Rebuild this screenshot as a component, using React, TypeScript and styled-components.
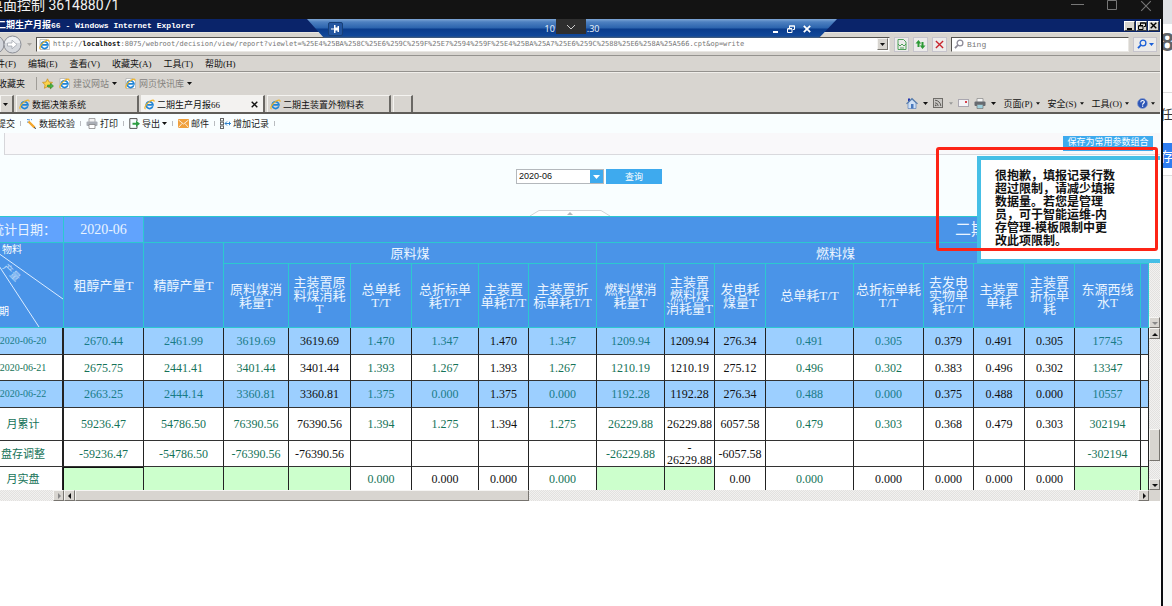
import React from "react";
import styled, { createGlobalStyle, css } from "styled-components";

const Global = createGlobalStyle`
  * { box-sizing: border-box; }
  body {
    margin: 0;
    background: #fff;
    font-family: "Liberation Serif", "Noto Sans CJK SC", serif;
    font-size: 9px;
    color: #111;
  }
  button, input, select { font: inherit; color: inherit; margin: 0; padding: 0; border: 0; background: none; }
  a { color: inherit; text-decoration: none; }
  svg { display: block; flex: none; }
`;

/* ---------- shell ---------- */

const Page = styled.div`
  display: grid;
  grid-template-columns: minmax(0, 1fr) 9px;
  min-height: 100vh;
  overflow: hidden;
`;

const Session = styled.div`
  position: relative;
  display: flex;
  flex-direction: column;
  margin-left: -16px;
  border-right: 2px solid #0b0d10;
`;

const SessionBar = styled.header`
  display: flex;
  justify-content: space-between;
  height: 19px;
  margin-right: -2px;
  padding: 0 11px 0 5px;
  background: #131313;
  color: #f0f0f0;
  font: 14px/11px Roboto, "Noto Sans CJK SC", sans-serif;
  white-space: nowrap;
`;

const SessionButtons = styled.div`
  display: flex;
  align-items: flex-start;
  gap: 22px;
`;

const BareButton = styled.button`
  display: flex;
  align-items: center;
  justify-content: center;
  gap: 2px;
  cursor: pointer;
`;

const Desktop = styled.div`
  position: relative;
  flex: 1;
  margin-right: 1px;
`;

const ConnectionBar = styled.div`
  position: absolute;
  z-index: 3;
  top: 0;
  left: 323px;
  width: 530px;
  height: 19px;
  display: flex;
  align-items: center;
  justify-content: space-between;
  padding: 0 26px 0 21px;
  background: linear-gradient(#7ea6d6 0, #4d80c0 3px, #2b63ad 9px, #0a3c8c 10px, #11489a 17px, #4a6078 19px);
  clip-path: polygon(0 0, 100% 0, 512px 100%, 17px 100%);
  color: #e6eef8;
  font: 9px/19px "Noto Sans", sans-serif;
`;

const ConnectionHost = styled.div`
  display: flex;
  align-self: flex-start;
  gap: 1px;
  margin-left: 28px;
`;

const ConnectionToggle = styled(BareButton)`
  width: 30px;
  height: 15px;
  background: #2f2f2f;
`;

const PinButton = styled(BareButton)`
  width: 15px;
  height: 14px;
  border: 1px solid #174078;
  border-radius: 2px;
  background: #2456a0;
`;

const ConnectionButtons = styled.div`
  display: flex;
  gap: 8px;
`;

/* ---------- browser ---------- */

const TitleBar = styled.div`
  display: flex;
  align-items: center;
  justify-content: space-between;
  height: 14px;
  padding: 0 1px 0 13px;
  background: #0a246a;
  border-bottom: 1px solid #e7e5e0;
  color: #fff;
  font: bold 8px/13px "Liberation Mono", "Noto Sans CJK SC", monospace;
`;

const TitleCjk = styled.span`
  font-size: 9px;
`;

const WindowButtons = styled.div`
  display: flex;
  gap: 1px;
`;

const WindowButton = styled(BareButton)`
  width: 11px;
  height: 10px;
  background: #d8d5d0;
  border: 1px solid;
  border-color: #fff #404040 #404040 #fff;
  color: #000;
`;

const AddressRow = styled.div`
  display: flex;
  align-items: center;
  gap: 4px;
  height: 23px;
  padding: 0 3px 0 14px;
  background: #d8d5d0;
  border-bottom: 1px solid #94928e;
`;

const NavGroup = styled.div`
  display: flex;
  align-items: center;
  gap: 5px;
  width: 34px;
`;

const Field = styled.label<{ $w?: number }>`
  display: flex;
  align-items: center;
  gap: 3px;
  height: 15px;
  ${(p) => (p.$w ? `width: ${p.$w}px;` : "flex: 1; min-width: 0;")}
  padding: 0 1px 0 2px;
  background: #fff;
  border: 1px solid;
  border-color: #55534f #e9e7e3 #e9e7e3 #55534f;
  color: #777;
`;

const Url = styled.div`
  flex: 1;
  min-width: 0;
  overflow: hidden;
  white-space: nowrap;
  font: 7px/13px "DejaVu Sans Mono", monospace;
`;

const UrlHost = styled.b`
  color: #111;
`;

const SearchInput = styled.input`
  flex: 1;
  min-width: 0;
  outline: 0;
  font: 8px/13px "Liberation Mono", monospace;
  &::placeholder { color: #777; opacity: 1; }
`;

const SquareButton = styled(BareButton)<{ $w?: number }>`
  width: ${(p) => p.$w ?? 15}px;
  height: 15px;
  background: #ecebea;
  border: 1px solid #c6c4cc;
`;

const ClassicButton = styled(BareButton)<{ $w?: number; $h?: number }>`
  flex: none;
  width: ${(p) => p.$w ?? 11}px;
  height: ${(p) => p.$h ?? 11}px;
  background: #d8d5d0;
  border: 1px solid;
  border-color: #f6f5f3 #77746f #77746f #f6f5f3;
`;

const MenuRow = styled.nav`
  display: flex;
  align-items: center;
  gap: 12px;
  height: 16px;
  padding-left: 3px;
  background: #d8d5d0;
  border-bottom: 1px solid #94928e;
  line-height: 12px;
`;

const FavoritesRow = styled.div`
  display: flex;
  align-items: center;
  gap: 5px;
  height: 22px;
  padding-left: 14px;
  background: #d8d5d0;
  border-top: 1px solid #f0eeea;
`;

const Favorite = styled.a`
  display: flex;
  align-items: center;
  gap: 3px;
  margin-right: 3px;
  color: #85837f;
`;

const Divider = styled.span`
  width: 1px;
  height: 13px;
  margin: 0 0 0 6px;
  background: #a09d98;
`;

const TabRow = styled.div`
  display: flex;
  align-items: flex-end;
  height: 20px;
  padding: 0 5px 0 16px;
  background: #d8d5d0;
  border-bottom: 2px solid #5f5d59;
`;

const Tab = styled.button<{ $active?: boolean; $w: number }>`
  display: flex;
  align-items: center;
  gap: 2px;
  width: ${(p) => p.$w}px;
  height: 17px;
  margin-right: 2px;
  padding: 0 5px 0 2px;
  white-space: nowrap;
  background: ${(p) => (p.$active ? "#f3f2f0" : "#d8d5d0")};
  border: solid;
  border-width: 1px 2px 0 1px;
  border-color: #f4f3f0 #6a6864 #fff #f4f3f0;
`;

const TabLabel = styled.span`
  flex: 1;
  text-align: left;
`;

const CommandBar = styled.div`
  display: flex;
  align-items: center;
  align-self: center;
  gap: 8px;
  margin-left: auto;
`;

const CommandIcons = styled.div`
  display: flex;
  align-items: center;
  gap: 5px;
`;

const Command = styled(BareButton)<{ $gap?: number }>`
  gap: ${(p) => p.$gap ?? 3}px;
  white-space: nowrap;
`;

/* ---------- report ---------- */

const Report = styled.main`
  position: relative;
  background: #f9feff;
`;

const Toolbar = styled.div`
  display: flex;
  align-items: center;
  height: 19px;
  padding-left: 8px;
  background: #f9feff;
  color: #222;
`;

const ToolButton = styled(BareButton)`
  position: relative;
  height: 13px;
  padding: 0 6px 0 5px;
  &::after {
    content: "";
    position: absolute;
    right: 0;
    top: 4px;
    width: 1px;
    height: 5px;
    background: #b9bcc0;
  }
`;

const Strip = styled.div`
  display: flex;
  justify-content: flex-end;
  height: 22px;
  margin-left: 20px;
  padding: 3px 7px 0 0;
  background: #f9f8fa;
  border-left: 1px solid #d6d6da;
  border-bottom: 1px solid #d9d9dd;
`;

const BlueButton = styled.button<{ $w: number }>`
  width: ${(p) => p.$w}px;
  height: 15px;
  background: #3eaaee;
  color: #fff;
  line-height: 12px;
  white-space: nowrap;
  cursor: pointer;
`;

const SaveButton = styled(BlueButton)`
  padding-bottom: 3px;
`;

const Params = styled.form`
  position: relative;
  display: flex;
  justify-content: center;
  gap: 2px;
  height: 61px;
  padding: 14px 0 0 34px;
`;

const SelectBox = styled.div`
  position: relative;
  width: 88px;
  height: 15px;
  border: 1px solid #b4b8bc;
  background: linear-gradient(90deg, #fff calc(100% - 13px), #3eaaee calc(100% - 13px));
`;

const MonthSelect = styled.select`
  width: 100%;
  height: 13px;
  padding-left: 2px;
  appearance: none;
  outline: 0;
  font: 9px/13px "Liberation Sans", sans-serif;
`;

const SelectArrow = styled.svg`
  position: absolute;
  right: 3px;
  top: 5px;
  pointer-events: none;
`;

const Handle = styled.button`
  position: absolute;
  left: calc(50% - 42px);
  bottom: 0;
`;

const SheetGrid = styled.div`
  display: grid;
  grid-template-columns: minmax(0, 1fr) 11px;
  background: #fff;
`;

const Sheet = styled.table`
  width: 100%;
  table-layout: fixed;
  border-collapse: separate;
  border-spacing: 0;
  border-top: 1px solid #2cc8cf;
  line-height: 12px;
  font-size: 12px;
  text-align: center;
`;

const Row = styled.tr<{ $h: number; $alt?: boolean }>`
  height: ${(p) => p.$h}px;
  background: ${(p) => (p.$alt ? "#9ccfff" : "#fff")};
`;

const Head = styled.th<{ $date?: boolean; $title?: boolean }>`
  padding: 0;
  overflow: hidden;
  white-space: nowrap;
  font-weight: 400;
  font-size: 13px;
  line-height: 13px;
  color: #eaf4ff;
  background: ${(p) => (p.$date ? "#61a3fd" : "#4a94e8")};
  border-right: 1px solid #2cc8cf;
  border-bottom: 1px solid #2cc8cf;
  ${(p) => p.$title && css`
    padding-right: 161px;
    text-align: right;
    font-size: 16px;
    line-height: 18px;
  `}
`;

const MonthText = styled.span`
  font-size: 14px;
`;

const Corner = styled(Head)`
  vertical-align: top;
`;

type Tone = "green" | "black";

const Cell = styled.td<{ $tone: Tone; $alt?: boolean; $edit?: boolean; $active?: boolean }>`
  padding: 0;
  overflow-wrap: anywhere;
  color: ${(p) => (p.$tone === "black" ? "#111" : p.$alt ? "#197c88" : "#157358")};
  background: ${(p) => (p.$edit ? "#ccffcc" : "transparent")};
  border-right: 1px solid #222;
  border-bottom: 1px solid #333;
  tr:last-child > & { border-bottom: 0; }
  ${(p) => p.$active && css`box-shadow: inset 0 1px #111, -1px 0 #111;`}
`;

const RowHead = styled.th<{ $small?: boolean; $alt?: boolean }>`
  padding: 0;
  font-weight: normal;
  font-size: ${(p) => (p.$small ? 10 : 11)}px;
  color: ${(p) => (p.$alt ? "#197c88" : "#157358")};
  border-right: 2px solid #222;
  border-bottom: 1px solid #333;
  tr:last-child > & { border-bottom: 0; }
`;

const trackFill = css`
  background: repeating-conic-gradient(#e2e1df 0 25%, #f2f1f0 0 50%) 0 0 / 2px 2px;
`;

const VTrack = styled.div<{ $h?: number }>`
  ${trackFill}
  display: flex;
  flex-direction: column;
  justify-content: flex-end;
  ${(p) => (p.$h ? `height: ${p.$h}px;` : "flex: 1;")}
`;

const VColumn = styled.div`
  display: flex;
  flex-direction: column;
`;

const Grow = styled.span`
  flex: 1;
`;

const VThumb = styled(ClassicButton)`
  margin-bottom: 18px;
`;

const HBar = styled.div`
  ${trackFill}
  display: flex;
  height: 11px;
`;

const HLeft = styled.div`
  display: flex;
  justify-content: flex-end;
  width: 80px;
`;

const HThumb = styled(ClassicButton)`
  width: 39%;
`;

const ScrollCorner = styled.span`
  background: #d8d5d0;
`;

const Notice = styled.div`
  position: absolute;
  z-index: 2;
  top: 42px;
  right: 0;
  width: 183px;
  height: 107px;
  padding: 10px 0 0 14px;
  background: #fff;
  border: solid #46bfe6;
  border-width: 4px 0 4px 4px;
  color: #111;
  font: bold 12px/13px "Liberation Sans", "Noto Sans CJK SC", sans-serif;
`;

const Highlight = styled.div`
  position: absolute;
  z-index: 4;
  top: 33px;
  right: 2px;
  width: 222px;
  height: 104px;
  border: 3px solid #fd2416;
  border-radius: 3px;
  pointer-events: none;
`;

/* ---------- page behind the session window ---------- */

const Behind = styled.aside`
  overflow: hidden;
  background: #f9f9f9;
  font: 13px/25px "Noto Sans CJK SC", sans-serif;
  text-indent: -3px;
`;

const BehindTop = styled.div`
  height: 24px;
  background: #e0e2e6;
`;

const BehindLogo = styled.div`
  height: 69px;
  border-bottom: 1px solid #dcdcdc;
  background: #fff;
  color: #5f6368;
  font: bold 26px/36px "Liberation Sans", sans-serif;
`;

const BehindLink = styled.div`
  height: 50px;
  padding-top: 8px;
  background: #fff;
  color: #333;
`;

const BehindButton = styled.div`
  height: 25px;
  background: #2f7df0;
  color: #fff;
`;

const BehindGap = styled.div`
  height: 8px;
  background: #fff;
  border-bottom: 1px solid #ddd;
`;

/* ---------- icons ---------- */

const Caret = ({ color = "#111", w = 5 }: { color?: string; w?: number }) => (
  <svg width={w} height="3" viewBox="0 0 5 3"><path d="M0 0h5L2.500 3z" fill={color} /></svg>
);

const Arrow = ({ dir, color = "#111" }: { dir: "up" | "down" | "left" | "right"; color?: string }) => {
  const d = {
    up: "M1 6h6L4 3z", down: "M1 3h6L4 6z", left: "M5 1v6L2 4z", right: "M3 1v6l3-3z",
  }[dir];
  return <svg width="8" height="8" viewBox="0 0 8 8"><path d={d} fill={color} /></svg>;
};

const IeIcon = ({ page }: { page?: boolean }) => (
  <svg width="11" height="11" viewBox="0 0 11 11" fill="none">
    {page && <path d="M1 .5h7l2.500 2.500v7.500H1z" fill="#fff" stroke="#aaa" strokeWidth=".7" />}
    <path d="M8.800 7.300A3.400 3.400 0 1 1 9 5.800H3.200" stroke="#1f84d6" strokeWidth="1.700" />
    <path d="M1.600 10C-.5 9.500 2 5.200 5 2.900 8 .7 10.800.4 9.900 2.800" stroke="#f0b428" strokeWidth="1.100" />
  </svg>
);

const NavIcon = () => (
  <svg width="24" height="19" viewBox="0 0 24 19">
    <circle cx="-3" cy="9.500" r="9" fill="#d3d6dc" stroke="#8b8e96" />
    <circle cx="14.500" cy="9.500" r="8.500" fill="#d5d8dd" stroke="#8b8e96" />
    <path d="M7 8a7.600 7.600 0 0 1 15 0z" fill="#eef0f3" />
    <path d="M9.500 8h4.500V5.200l5 4.300-5 4.300V11H9.500z" fill="#fff" stroke="#9a9da6" strokeWidth=".7" />
  </svg>
);

const Lens = ({ color }: { color: string }) => (
  <svg width="10" height="10" viewBox="0 0 10 10" fill="none" stroke={color}>
    <circle cx="6" cy="4" r="2.900" strokeWidth="1.300" /><path d="M4 6L1 9.200" strokeWidth="1.800" />
  </svg>
);

const CompatIcon = () => (
  <svg width="10" height="11" viewBox="0 0 10 11" fill="none" stroke="#3f9a4b" strokeWidth=".9">
    <path d="M1 .5h5.500L9 3v7.500H1zM1 5l2 2 2-2 2 2 2-2" /><path d="M3 9h4" />
  </svg>
);

const RefreshIcon = () => (
  <svg width="11" height="11" viewBox="0 0 11 11" fill="#2c9a35">
    <path d="M3.500 1L.5 4.500h2V8h2V4.500h1.700z" /><path d="M7.500 10l3-3.500h-2V3h-2v3.500H4.800z" />
  </svg>
);

const Cross = ({ color, size, stroke }: { color: string; size: number; stroke: number }) => (
  <svg width={size} height={size} viewBox="0 0 10 10" stroke={color} strokeWidth={stroke}><path d="M1 1l8 8M9 1L1 9" /></svg>
);

const RestoreIcon = ({ color }: { color: string }) => (
  <svg width="8" height="8" viewBox="0 0 8 8" fill="none" stroke={color}>
    <path d="M2.500 3V1h5v3.500H6M2 1h6" /><path d="M.5 4h4.500v3.500H.5zM.5 3.500H5" />
  </svg>
);

const MinIcon = ({ color }: { color: string }) => (
  <svg width="6" height="8" viewBox="0 0 6 8"><path d="M0 6h5v2H0z" fill={color} /></svg>
);

const StarIcon = () => (
  <svg width="12" height="12" viewBox="0 0 12 12">
    <path d="M5.500.8l1.500 3.200 3.500.4-2.600 2.400.7 3.500-3.100-1.700-3.100 1.700.7-3.500L.5 4.400 4 4z" fill="#fbd34b" stroke="#c98a12" strokeWidth=".7" />
    <path d="M5.500 7h3V5.200l3 2.800-3 2.800V9h-3z" fill="#49b544" stroke="#257a25" strokeWidth=".5" />
  </svg>
);

const HomeIcon = () => (
  <svg width="12" height="12" viewBox="0 0 12 12">
    <path d="M2 1.500h2v3H2z" fill="#2335b0" /><path d="M2 6l4-4 4 4v5.500H2z" fill="#cfe0f5" stroke="#4c75b5" strokeWidth=".6" />
    <path d="M0 6.500L6 .8l6 5.700-1 .8L6 2.700 1 7.300z" fill="#5a7fae" /><path d="M5 7h2.500v4.500H5z" fill="#4979bd" />
  </svg>
);

const RssIcon = () => (
  <svg width="10" height="10" viewBox="0 0 10 10" fill="none">
    <rect x=".5" y=".5" width="9" height="9" fill="#c9c7c4" stroke="#6f6d69" />
    <path d="M2 2.200A6 6 0 0 1 7.800 8M2 4.800A3.300 3.300 0 0 1 5.200 8" stroke="#5f5d59" /><circle cx="2.700" cy="7.300" r=".9" fill="#5f5d59" />
  </svg>
);

const MailIcon = () => (
  <svg width="11" height="8" viewBox="0 0 11 8">
    <rect x=".5" y=".5" width="10" height="7" fill="#f4f3f7" stroke="#aaa7b0" /><path d="M7 2h2v2H7z" fill="#d8414b" />
  </svg>
);

const PrinterIcon = ({ light }: { light?: boolean }) => (
  <svg width="12" height="11" viewBox="0 0 12 11">
    <path d="M3 .5h6v4H3z" fill="#f3f3f3" stroke="#888" strokeWidth=".7" />
    <rect x=".5" y="3.500" width="11" height="4.500" rx="1" fill={light ? "#a9aeb5" : "#666a70"} />
    <path d="M3 6.500h6v4H3z" fill={light ? "#fff" : "#9fd0dd"} stroke="#777" strokeWidth=".7" />
  </svg>
);

const HelpIcon = () => (
  <svg width="11" height="11" viewBox="0 0 11 11" fill="none">
    <circle cx="5.500" cy="5.500" r="5" fill="#2c55b5" stroke="#8aa0d0" strokeWidth=".8" />
    <path d="M3.800 4.200c0-2.300 3.500-2.200 3.500-.2 0 1.300-1.700 1.200-1.700 2.700M5.600 7.600v1.200" stroke="#fff" strokeWidth="1.200" />
  </svg>
);

const CheckIcon = () => (
  <svg width="11" height="11" viewBox="0 0 11 11" fill="none">
    <path d="M1 1.500l3 .5M1 4l2 .3M5 1.500l1 .3" stroke="#4a90d9" />
    <path d="M2.500 3.500l6 6" stroke="#f3a52a" strokeWidth="2.400" /><path d="M8 9.500l2 1" stroke="#333" />
  </svg>
);

const ExportIcon = () => (
  <svg width="11" height="11" viewBox="0 0 11 11" fill="none">
    <path d="M8 3V.6H.8v9.800H8V8" stroke="#555" /><path d="M3.500 4.700H7V2.500l4 3.200-4 3.200V6.700H3.500z" fill="#2f9e44" />
  </svg>
);

const EnvelopeIcon = () => (
  <svg width="11" height="9" viewBox="0 0 11 9" fill="none">
    <rect width="11" height="9" fill="#f0a03c" /><path d="M.5 1L5.500 5l5-4M.5 8.500l3.500-4M10.500 8.500L7 4.500" stroke="#fff" strokeWidth=".8" />
  </svg>
);

const RecordIcon = () => (
  <svg width="11" height="11" viewBox="0 0 11 11" fill="none" stroke="#666">
    <rect x=".5" y=".5" width="3" height="2.500" /><rect x=".5" y="4.200" width="3" height="2.500" /><rect x=".5" y="8" width="3" height="2.500" />
    <path d="M5 5.500h6M7 3.500l-2 2 2 2M9.500 3.800v3.400" stroke="#3584cc" />
  </svg>
);

/* ---------- data ---------- */

const MENU = ["文件(F)", "编辑(E)", "查看(V)", "收藏夹(A)", "工具(T)", "帮助(H)"];

const WIDTHS = [80, 80, 80, 65, 62, 61, 67, 50, 68, 68, 50, 51, 88, 70, 50, 51, 50, 66];

const TONES: Tone[] = [
  "green", "green", "green", "black", "green", "green", "black", "green", "green",
  "black", "black", "green", "green", "black", "black", "black", "green",
];

const SUBHEADS = [
  "原料煤消\n耗量T", "主装置原\n料煤消耗\nT", "总单耗\nT/T", "总折标单\n耗T/T", "主装置\n单耗T/T", "主装置折\n标单耗T/T",
  "燃料煤消\n耗量T", "主装置\n燃料煤\n消耗量T", "发电耗\n煤量T", "总单耗T/T", "总折标单耗\nT/T", "去发电\n实物单\n耗T/T",
  "主装置\n单耗", "主装置\n折标单\n耗", "东源西线\n水T", "",
];

interface DataRow { label: string; h: number; alt?: boolean; small?: boolean; values: string[] }

const E = "edit";
const ROWS: DataRow[] = [
  { label: "2020-06-20", h: 27, alt: true, small: true, values: "2670.44 2461.99 3619.69 3619.69 1.470 1.347 1.470 1.347 1209.94 1209.94 276.34 0.491 0.305 0.379 0.491 0.305 17745".split(" ") },
  { label: "2020-06-21", h: 26, small: true, values: "2675.75 2441.41 3401.44 3401.44 1.393 1.267 1.393 1.267 1210.19 1210.19 275.12 0.496 0.302 0.383 0.496 0.302 13347".split(" ") },
  { label: "2020-06-22", h: 27, alt: true, small: true, values: "2663.25 2444.14 3360.81 3360.81 1.375 0.000 1.375 0.000 1192.28 1192.28 276.34 0.488 0.000 0.375 0.488 0.000 10557".split(" ") },
  { label: "月累计", h: 33, values: "59236.47 54786.50 76390.56 76390.56 1.394 1.275 1.394 1.275 26229.88 26229.88 6057.58 0.479 0.303 0.368 0.479 0.303 302194".split(" ") },
  { label: "盘存调整", h: 26, values: ["-59236.47", "-54786.50", "-76390.56", "-76390.56", "", "", "", "", "-26229.88", "-\n26229.88", "-6057.58", "", "", "", "", "", "-302194"] },
  { label: "月实盘", h: 23, values: [E, E, E, E, "0.000", "0.000", "0.000", "0.000", E, E, "0.00", "0.000", "0.000", "0.000", "0.000", "0.000", E] },
];

const Lines = ({ text }: { text: string }) => (
  <>
    {text.split("\n").map((line, i) => (
      <React.Fragment key={i}>{i > 0 && <br />}{line}</React.Fragment>
    ))}
  </>
);

const toneOf = (row: DataRow, i: number): Tone =>
  row.label === "月实盘" && (i === 5 || i === 12) ? "black" : TONES[i];

/* ---------- sections ---------- */

function Browser() {
  return (
    <>
      <TitleBar>
        <span><TitleCjk>二期生产月报</TitleCjk>66 - Windows Internet Explorer</span>
        <WindowButtons>
          <WindowButton aria-label="最小化"><MinIcon color="#000" /></WindowButton>
          <WindowButton aria-label="还原"><RestoreIcon color="#000" /></WindowButton>
          <WindowButton aria-label="关闭"><Cross color="#000" size={7} stroke={2} /></WindowButton>
        </WindowButtons>
      </TitleBar>
      <AddressRow>
        <NavGroup><NavIcon /><Caret color="#a9a6a1" /></NavGroup>
        <Field as="div">
          <IeIcon page />
          <Url>
            http://<UrlHost>localhost</UrlHost>:8075/webroot/decision/view/report?viewlet=%25E4%25BA%258C%25E6%259C%259F%25E7%2594%259F%25E4%25BA%25A7%25E6%259C%2588%25E6%258A%25A566.cpt&amp;op=write
          </Url>
          <ClassicButton $h={12} aria-label="历史地址"><Caret /></ClassicButton>
        </Field>
        <SquareButton aria-label="兼容性视图"><CompatIcon /></SquareButton>
        <SquareButton aria-label="刷新"><RefreshIcon /></SquareButton>
        <SquareButton aria-label="停止"><Cross color="#c8242c" size={9} stroke={1.500} /></SquareButton>
        <Field $w={178}>
          <Lens color="#8d8b98" />
          <SearchInput placeholder="Bing" aria-label="搜索" />
        </Field>
        <SquareButton $w={24} aria-label="搜索"><Lens color="#1a5fd8" /><Caret color="#1a5fd8" /></SquareButton>
      </AddressRow>
      <MenuRow>{MENU.map((m) => <a href="#" key={m}>{m}</a>)}</MenuRow>
      <FavoritesRow>
        <span>收藏夹</span>
        <Divider />
        <StarIcon />
        <Favorite href="#"><IeIcon page />建议网站<Caret /></Favorite>
        <Favorite href="#"><IeIcon page />网页快讯库<Caret /></Favorite>
      </FavoritesRow>
      <TabRow>
        <Tab $w={14} aria-label="标签列表"><Caret /></Tab>
        <Tab $w={123}><IeIcon /><TabLabel>数据决策系统</TabLabel></Tab>
        <Tab $w={124} $active><IeIcon /><TabLabel>二期生产月报66</TabLabel><Cross color="#111" size={7} stroke={2} /></Tab>
        <Tab $w={124}><IeIcon /><TabLabel>二期主装置外物料表</TabLabel></Tab>
        <Tab $w={20} aria-label="新建标签" />
        <CommandBar>
          <CommandIcons>
            <Command $gap={5} aria-label="主页"><HomeIcon /><Caret /></Command>
            <Command $gap={6} aria-label="源"><RssIcon /><Caret color="#999" w={4} /></Command>
            <Command aria-label="阅读邮件"><MailIcon /></Command>
            <Command $gap={5} aria-label="打印"><PrinterIcon /><Caret /></Command>
          </CommandIcons>
          <Command>页面(P)<Caret w={4} /></Command>
          <Command>安全(S)<Caret w={4} /></Command>
          <Command>工具(O)<Caret w={4} /></Command>
          <Command aria-label="帮助"><HelpIcon /><Caret w={4} /></Command>
        </CommandBar>
      </TabRow>
    </>
  );
}

function ReportTable() {
  return (
    <Sheet>
      <colgroup>
        {WIDTHS.map((w, i) => <col key={i} width={w} />)}
        <col />
      </colgroup>
      <thead>
        <Row $h={26}>
          <Head $date>统计日期：</Head>
          <Head $date><MonthText>2020-06</MonthText></Head>
          <Head $title colSpan={17}>二期</Head>
        </Row>
        <Row $h={21}>
          <Corner rowSpan={2}>
            <svg width="79" height="84" viewBox="0 0 79 84" stroke="#dcecff" fontSize="10">
              <path d="M0 0L79 56M0 0L55 84" />
              <g fill="#fff" stroke="none">
                <text x="18" y="10">物料</text>
                <text transform="translate(18 25) rotate(45)" fill="#b9d8f8">产量</text>
                <text x="5" y="72">日期</text>
              </g>
            </svg>
          </Corner>
          <Head rowSpan={2}>粗醇产量T</Head>
          <Head rowSpan={2}>精醇产量T</Head>
          <Head colSpan={6}>原料煤</Head>
          <Head colSpan={8}>燃料煤</Head>
          <Head colSpan={2} />
        </Row>
        <Row $h={64}>
          {SUBHEADS.map((s, i) => <Head key={i}><Lines text={s} /></Head>)}
        </Row>
      </thead>
      <tbody>
        {ROWS.map((row) => (
          <Row key={row.label} $h={row.h} $alt={row.alt}>
            <RowHead scope="row" $small={row.small} $alt={row.alt}>{row.label}</RowHead>
            {row.values.map((v, i) => (
              <Cell key={i} $tone={toneOf(row, i)} $alt={row.alt} $edit={v === E} $active={v === E && i === 0}>
                {v === E ? null : <Lines text={v} />}
              </Cell>
            ))}
            <Cell $tone="green" $edit={row.label === "月实盘"} />
          </Row>
        ))}
      </tbody>
    </Sheet>
  );
}

export default function App() {
  return (
    <Page>
      <Global />
      <Session>
        <SessionBar>
          <span>桌面控制 361488071</span>
          <SessionButtons>
            <BareButton aria-label="最小化"><svg width="13" height="10" viewBox="0 0 13 10" stroke="#777"><path d="M0 4.500h13" /></svg></BareButton>
            <BareButton aria-label="最大化"><svg width="12" height="10" viewBox="0 0 12 10" stroke="#777" fill="none"><path d="M1.500 .5h9v9h-9z" /></svg></BareButton>
            <BareButton aria-label="关闭"><Cross color="#777" size={12} stroke={0.900} /></BareButton>
          </SessionButtons>
        </SessionBar>
        <Desktop>
          <ConnectionBar>
            <PinButton aria-label="固定">
              <svg width="9" height="8" viewBox="0 0 9 8" fill="#fff"><path d="M0 3.500h3V0h1.500v2.500h2V1H8v6H6.500V5.500h-2V8H3V4.500H0z" /></svg>
            </PinButton>
            <ConnectionHost>
              <span>10</span>
              <ConnectionToggle aria-label="展开">
                <svg width="10" height="6" viewBox="0 0 10 6" fill="none" stroke="#ccc"><path d="M1 1l4 4 4-4" /></svg>
              </ConnectionToggle>
              <span>.30</span>
            </ConnectionHost>
            <ConnectionButtons>
              <BareButton aria-label="最小化"><MinIcon color="#fff" /></BareButton>
              <BareButton aria-label="还原"><RestoreIcon color="#fff" /></BareButton>
              <BareButton aria-label="断开"><Cross color="#fff" size={8} stroke={2.200} /></BareButton>
            </ConnectionButtons>
          </ConnectionBar>
          <Browser />
          <Report>
            <Toolbar>
              <ToolButton>提交</ToolButton>
              <ToolButton><CheckIcon />数据校验</ToolButton>
              <ToolButton><PrinterIcon light />打印</ToolButton>
              <ToolButton><ExportIcon />导出<Caret /></ToolButton>
              <ToolButton><EnvelopeIcon />邮件</ToolButton>
              <ToolButton><RecordIcon />增加记录</ToolButton>
            </Toolbar>
            <Strip><SaveButton $w={90}>保存为常用参数组合</SaveButton></Strip>
            <Params onSubmit={(e) => e.preventDefault()}>
              <SelectBox>
                <MonthSelect aria-label="统计月份" defaultValue="2020-06"><option>2020-06</option></MonthSelect>
                <SelectArrow width="7" height="4" viewBox="0 0 7 4"><path d="M0 0h7L3.500 4z" fill="#fff" /></SelectArrow>
              </SelectBox>
              <BlueButton $w={56} type="submit">查询</BlueButton>
              <Handle type="button" aria-label="收起参数">
                <svg width="80" height="6" viewBox="0 0 80 6" fill="none">
                  <path d="M0 6L9 .5h62L80 6" fill="#fff" stroke="#d2d4d6" /><path d="M37 5h6l-3-3z" fill="#b4b6b8" />
                </svg>
              </Handle>
            </Params>
            <SheetGrid>
              <ReportTable />
              <VColumn>
                <VTrack $h={112}><ClassicButton aria-label="向下"><Arrow dir="down" color="#888" /></ClassicButton></VTrack>
                <VTrack>
                  <ClassicButton aria-label="向上滚动"><Arrow dir="up" /></ClassicButton>
                  <Grow />
                  <VThumb $h={32} aria-label="垂直滚动条" />
                  <ClassicButton aria-label="向下滚动"><Arrow dir="down" /></ClassicButton>
                </VTrack>
              </VColumn>
              <HBar>
                <HLeft><ClassicButton aria-label="向右"><Arrow dir="right" color="#888" /></ClassicButton></HLeft>
                <ClassicButton aria-label="向左滚动"><Arrow dir="left" /></ClassicButton>
                <HThumb aria-label="水平滚动条" />
                <Grow />
                <ClassicButton aria-label="向右滚动"><Arrow dir="right" /></ClassicButton>
              </HBar>
              <ScrollCorner />
            </SheetGrid>
            <Notice role="alert">
              <Lines text={"很抱歉，填报记录行数\n超过限制，请减少填报\n数据量。若您是管理\n员，可于智能运维-内\n存管理-模板限制中更\n改此项限制。"} />
            </Notice>
            <Highlight />
          </Report>
        </Desktop>
      </Session>
      <Behind>
        <BehindTop />
        <BehindLogo>8</BehindLogo>
        <BehindLink>任</BehindLink>
        <BehindButton>存</BehindButton>
        <BehindGap />
      </Behind>
    </Page>
  );
}
